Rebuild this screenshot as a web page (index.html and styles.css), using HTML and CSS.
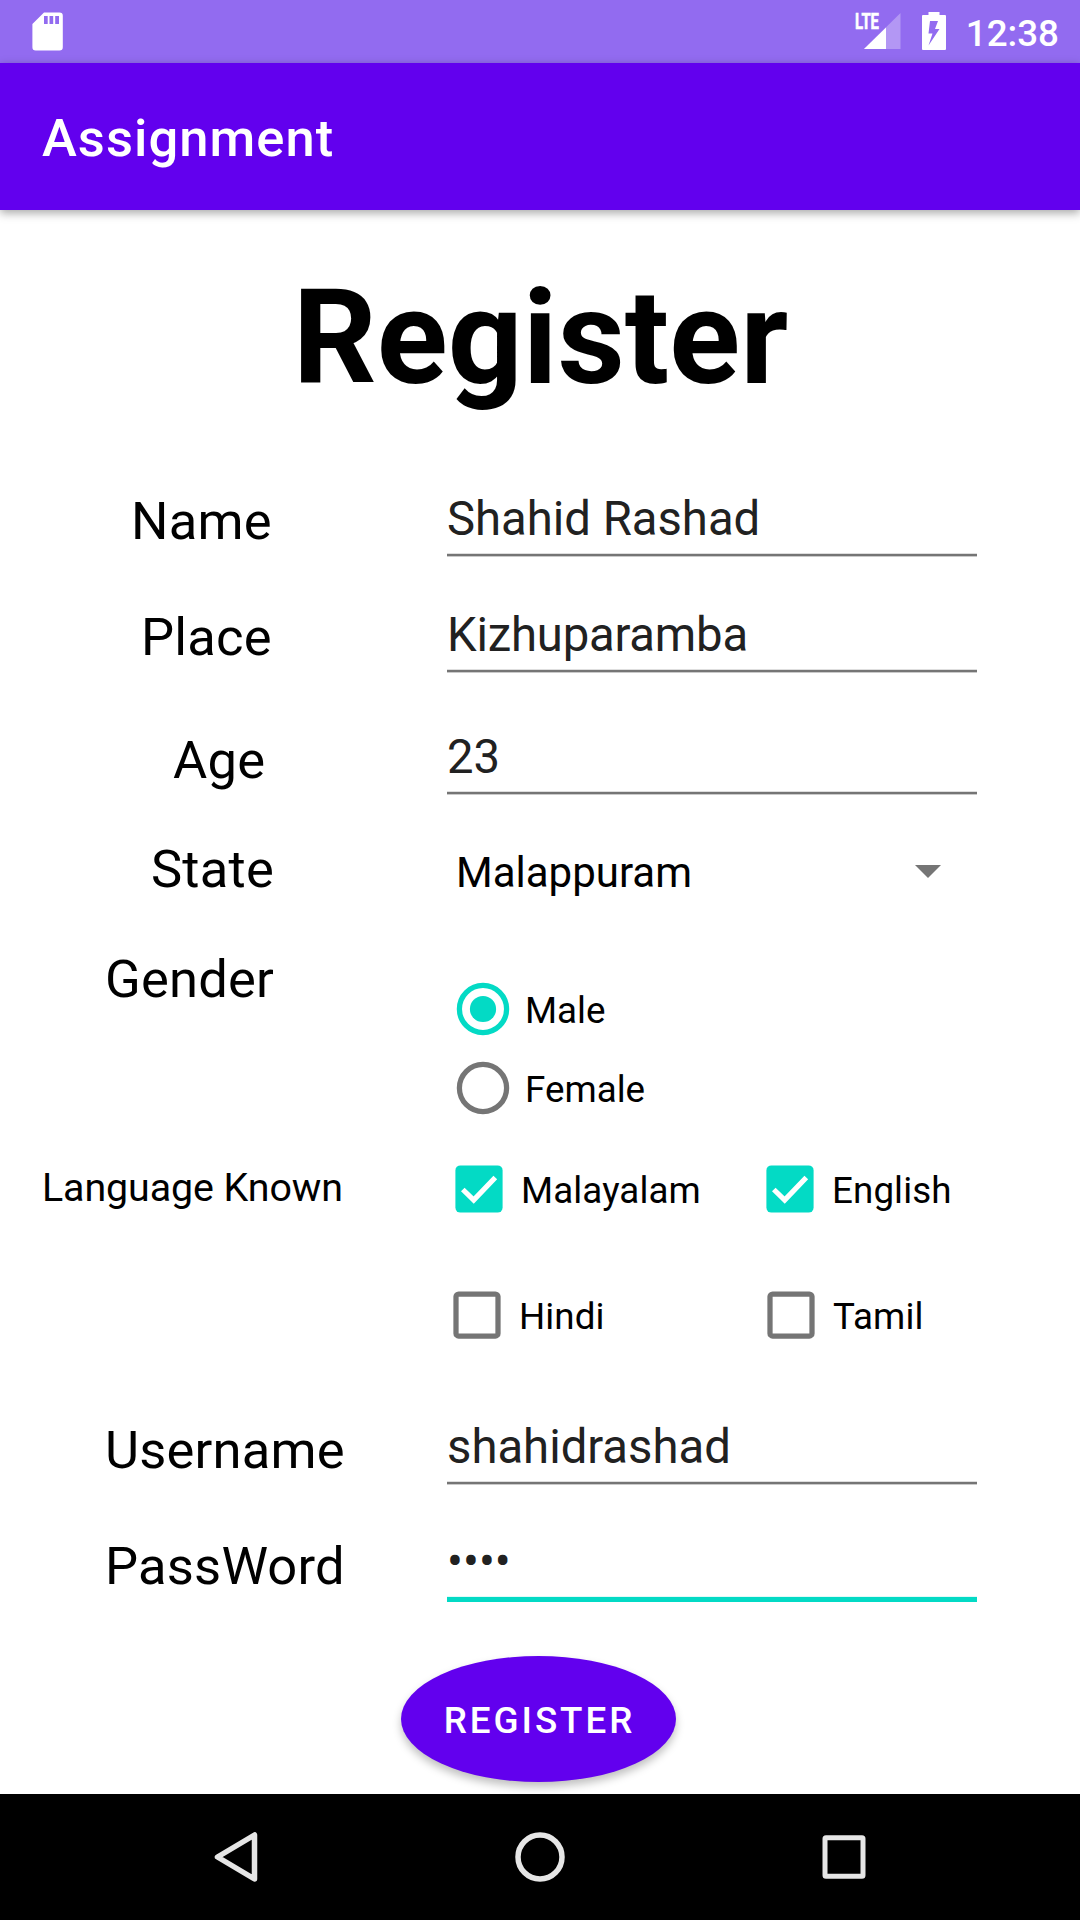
FILE: index.html
```html
<!DOCTYPE html>
<html lang="en">
<head>
<meta charset="utf-8">
<title>Assignment</title>
<link rel="stylesheet" href="styles.css">
</head>
<body>
<div class="screen">
  <div class="status-bar">
    <svg class="sd-icon" width="32" height="40" viewBox="0 0 32 40"><path fill="#fff" fill-rule="evenodd" d="M12 .5H27.5a3.3 3.3 0 0 1 3.3 3.3V35.2a3.3 3.3 0 0 1-3.3 3.3H3.7A3.3 3.3 0 0 1 .4 35.200V12zM12 4V12h3.700V4zm5.500 0V12h3.700V4zm5.700 0V12H27V4z"/></svg>
    <div class="status-right">
      <svg class="signal-icon" width="46" height="38" viewBox="0 0 46 38">
        <path fill="#fff" fill-opacity=".3" d="M45.500 1V37H9z"/>
        <path fill="#fff" d="M31 15.500V37H9z"/>
        <path fill="#926bf0" d="M0 0h25v19H0z"/>
        <text class="lte" x="0" y="17" textLength="24" lengthAdjust="spacingAndGlyphs">LTE</text>
      </svg>
      <svg class="battery-icon" width="24" height="38" viewBox="0 0 24 38"><path fill="#fff" fill-rule="evenodd" d="M6.500 0H17.500V3H23a1 1 0 0 1 1 1V37a1 1 0 0 1-1 1H1A1 1 0 0 1 0 37V4A1 1 0 0 1 1 3H6.500zM8 9L6.500 21.500H10.500L6.500 33.500L17.500 17H13L16 9z"/></svg>
      <span class="clock">12:38</span>
    </div>
  </div>
  <header class="app-bar">Assignment</header>
  <main class="form">
    <h1 class="title">Register</h1>
    <div class="row row-name">
      <span class="label">Name</span>
      <div class="field"><span class="value">Shahid Rashad</span></div>
    </div>
    <div class="row row-place">
      <span class="label">Place</span>
      <div class="field field-place"><span class="value">Kizhuparamba</span></div>
    </div>
    <div class="row row-age">
      <span class="label">Age</span>
      <div class="field"><span class="value">23</span></div>
    </div>
    <div class="row row-state">
      <span class="label">State</span>
      <div class="spinner"><span>Malappuram</span><svg width="26" height="13" viewBox="0 0 26 13"><path fill="#757575" d="M0 0H26L13 13z"/></svg></div>
    </div>
    <div class="row row-gender">
      <span class="label">Gender</span>
      <div class="radios">
        <div class="option"><svg class="radio" width="54" height="54" viewBox="-27 -27 54 54"><circle r="23.600" fill="none" stroke="#03dac5" stroke-width="5.250"/><circle r="13.100" fill="#03dac5"/></svg><span>Male</span></div>
        <div class="option"><svg class="radio" width="54" height="54" viewBox="-27 -27 54 54"><circle r="23.600" fill="none" stroke="#757575" stroke-width="5.250"/></svg><span>Female</span></div>
      </div>
    </div>
    <div class="row row-language">
      <span class="label label-small">Language Known</span>
      <div class="checks">
        <div class="option"><svg class="check" width="48" height="48" viewBox="0 0 48 48"><rect x=".4" y=".4" width="47.200" height="47.200" rx="5" fill="#03dac5"/><path d="M7.800 24.500L18.700 35L40.300 12.500" fill="none" stroke="#fff" stroke-width="5.200"/></svg><span>Malayalam</span></div>
        <div class="option"><svg class="check" width="48" height="48" viewBox="0 0 48 48"><rect x=".4" y=".4" width="47.200" height="47.200" rx="5" fill="#03dac5"/><path d="M7.800 24.500L18.700 35L40.300 12.500" fill="none" stroke="#fff" stroke-width="5.200"/></svg><span>English</span></div>
        <div class="option option-hindi"><svg class="check" width="48" height="48" viewBox="0 0 48 48"><rect x="3" y="3" width="42" height="42" rx="2.600" fill="none" stroke="#757575" stroke-width="5.250"/></svg><span>Hindi</span></div>
        <div class="option option-tamil"><svg class="check" width="48" height="48" viewBox="0 0 48 48"><rect x="3" y="3" width="42" height="42" rx="2.600" fill="none" stroke="#757575" stroke-width="5.250"/></svg><span>Tamil</span></div>
      </div>
    </div>
    <div class="row row-username">
      <span class="label">Username</span>
      <div class="field"><span class="value">shahidrashad</span></div>
    </div>
    <div class="row row-password">
      <span class="label">PassWord</span>
      <div class="field field-focused"><span class="value">••••</span></div>
    </div>
    <button class="submit" type="button">REGISTER</button>
  </main>
  <nav class="nav-bar">
    <svg width="50" height="54" viewBox="-25 -27 50 54"><path d="M18.500 -22V22L-18.500 0z" fill="none" stroke="#e6e6e6" stroke-width="5.500" stroke-linejoin="round"/></svg>
    <svg width="54" height="54" viewBox="-27 -27 54 54"><circle r="22" fill="none" stroke="#e6e6e6" stroke-width="5.500"/></svg>
    <svg width="50" height="54" viewBox="-25 -27 50 54"><rect x="-19" y="-19.200" width="38" height="38.400" rx="1" fill="none" stroke="#e6e6e6" stroke-width="5"/></svg>
  </nav>
</div>
</body>
</html>
```

FILE: styles.css
```css
* {
  box-sizing: border-box;
}

body {
  margin: 0;
  background: #fff;
  color: #000;
  font-family: Roboto, sans-serif;
}

svg {
  display: block;
  flex: none;
}

.screen {
  display: flex;
  flex-direction: column;
  width: 1080px;
  height: 1920px;
  overflow: hidden;
}

.status-bar {
  display: flex;
  justify-content: space-between;
  flex: none;
  height: 63px;
  padding: 12px 21px 0 32px;
  background: #926bf0;
  color: #fff;
}

.status-right {
  display: flex;
}

.signal-icon {
  overflow: visible;
}

.battery-icon {
  margin-left: 21px;
}

.lte {
  fill: #fff;
  stroke: #fff;
  stroke-width: 0.6px;
  font-size: 22px;
  font-weight: 700;
}

.clock {
  margin: 0 0 0 20px;
  font-size: 36.75px;
  font-weight: 500;
  line-height: 44px;
}

.app-bar {
  flex: none;
  height: 147px;
  padding: 44px 42px 0;
  background: #6200ee;
  color: #fff;
  font-size: 52.5px;
  font-weight: 500;
  line-height: 62px;
  letter-spacing: 1.05px;
  box-shadow: 0 3px 9px rgba(0, 0, 0, 0.35);
}

.form {
  display: flex;
  flex-direction: column;
  flex: none;
  height: 1584px;
  padding-top: 51px;
}

.title {
  height: 229px;
  margin: 0;
  padding-left: 1px;
  font-size: 131.25px;
  font-weight: 700;
  line-height: 154px;
  text-align: center;
}

.row {
  display: grid;
  grid-template-columns: 447px 530px;
  align-items: start;
  flex: none;
}

.label {
  padding-left: 105px;
  font-size: 52.5px;
  line-height: 62px;
  letter-spacing: 0.2px;
  white-space: nowrap;
}

.label-small {
  padding: 2px 0 0 42px;
  font-size: 39.375px;
  line-height: 46px;
  letter-spacing: -0.08px;
}

.row-name {
  height: 116px;
}

.row-name .label {
  padding-left: 131px;
}

.row-place {
  height: 122px;
}

.row-place .label {
  padding-left: 141px;
}

.row-age {
  height: 110px;
}

.row-age .label {
  padding: 1px 0 0 173px;
}

.row-state {
  height: 110px;
}

.row-state .label {
  padding-left: 151px;
}

.row-gender {
  height: 215px;
}

.row-language {
  height: 255px;
}

.row-username {
  height: 117px;
}

.row-username .label {
  padding-top: 1px;
}

.row-password {
  height: 121px;
}

.field {
  height: 66px;
  margin-top: 1px;
  background: linear-gradient(#dedede 1px, #757575 1px 3px, #cacaca 3px) bottom / 100% 4px no-repeat;
  color: #212121;
  font-size: 47.25px;
  line-height: 56px;
}

.field-place {
  letter-spacing: -0.2px;
}

.field-focused {
  background: linear-gradient(#e0faf8 1px, #03dac5 1px) bottom / 100% 6px no-repeat;
  line-height: 52px;
}

.spinner {
  display: flex;
  justify-content: space-between;
  padding: 10px 36px 0 9px;
  font-size: 42px;
  line-height: 50px;
}

.spinner svg {
  margin-top: 17px;
}

.radios {
  padding: 21px 0 0 9px;
}

.option {
  display: flex;
  align-items: center;
  height: 79px;
  font-size: 36.75px;
  line-height: 44px;
}

.option span {
  padding-top: 5px;
}

.radio {
  margin-right: 15px;
}

.checks {
  display: grid;
  grid-template-columns: 311px 219px;
  row-gap: 47px;
  padding: 0 0 0 8px;
  margin-top: -14px;
  letter-spacing: 0.1px;
}

.check {
  margin-right: 18px;
}

.option-hindi {
  margin-left: -2px;
}

.option-tamil {
  margin-left: 1px;
}

.submit {
  flex: none;
  width: 275px;
  height: 126px;
  margin: 0 0 0 401px;
  padding: 3px 0 0 2px;
  border: 0;
  border-radius: 50%;
  background: #6200ee;
  color: #fff;
  font: 500 36.75px/44px Roboto, sans-serif;
  letter-spacing: 2.95px;
  box-shadow: 0 5px 8px rgba(0, 0, 0, 0.25);
}

.nav-bar {
  display: flex;
  justify-content: space-between;
  align-items: center;
  flex: none;
  height: 126px;
  padding: 0 211px;
  background: #000;
  z-index: 1;
}
```
